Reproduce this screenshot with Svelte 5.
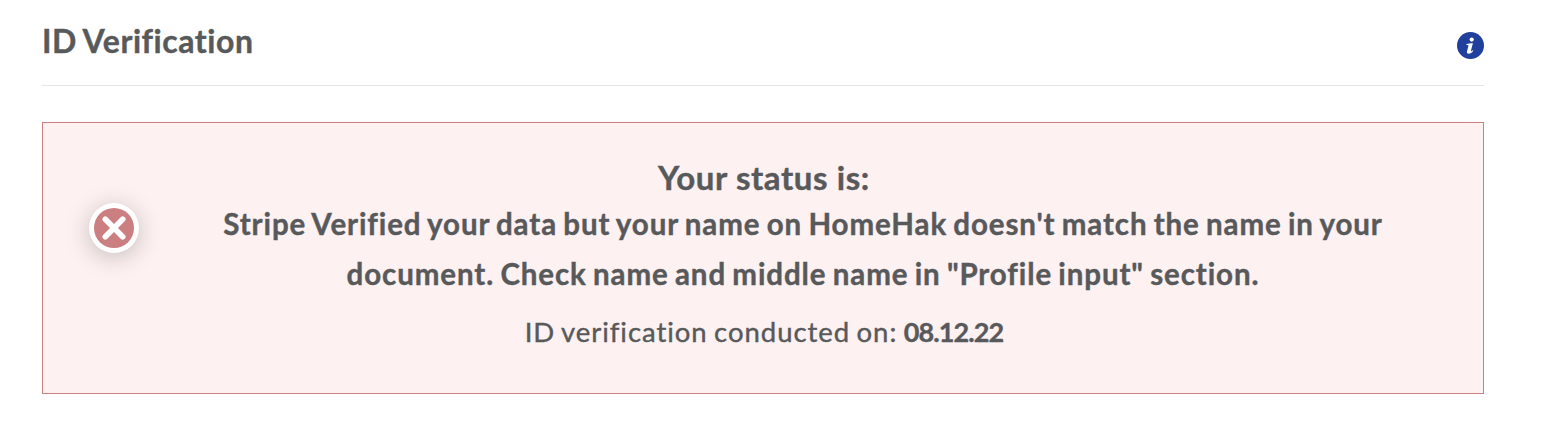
<script lang="ts">
    let title = "ID Verification";
    let verifiedOn = "08.12.22";
    let messageLines = [
        "Stripe Verified your data but your name on HomeHak doesn't match the name in your",
        'document. Check name and middle name in "Profile input" section.'
    ];
</script>

<section class="verification">
    <header class="header">
        <h2>{title}</h2>
        <svg class="info" viewBox="0 0 27 27" aria-label="Info">
            <circle cx="13.5" cy="13.5" r="13.5" fill="#213f9c" />
            <circle cx="14.7" cy="7.6" r="2.1" fill="#fff" />
            <path d="M9.5 12C11.5 11.5 13.2 11.3 15.9 11.2L14 18.4C13.7 19.7 14.4 19.5 15.8 18.2L16.4 18.8C14.9 20.9 13.3 21.7 11.8 21.7C10.2 21.7 9.6 20.7 10 19.2L11.4 14.1C11.7 13.1 11.3 12.9 9.4 12.9Z" fill="#fff" />
        </svg>
    </header>

    <div class="status">
        <h3>Your status is:</h3>
        <div class="status_row">
            <div class="badge">
                <svg viewBox="0 0 50 50">
                    <circle cx="25" cy="25" r="20" fill="#cb7f81" />
                    <path d="M16.3 16.3L33.7 33.7M33.7 16.3L16.3 33.7" stroke="#fff" stroke-width="5.6" stroke-linecap="round" />
                </svg>
            </div>
            <p class="message">
                {#each messageLines as line}
                    <span>{line}</span>
                {/each}
            </p>
        </div>
        <p class="date">ID verification conducted on: <b>{verifiedOn}</b></p>
    </div>
</section>

<style>
    :global(body) {
        background-color: #fff;
    }

    .verification {
        padding: 0 84px 0 42px;
        color: #58595b;
        font-family: Lato, "Liberation Sans", sans-serif;
        font-variant-ligatures: none;
        -webkit-text-stroke: 0.4px #58595b;
    }

    h2, h3, p {
        margin: 0;
        white-space: nowrap;
    }

    .header {
        box-sizing: border-box;
        height: 86px;
        display: flex;
        justify-content: space-between;
        align-items: flex-start;
        border-bottom: 1px solid #e4e4e4;
    }

    h2 {
        padding-top: 21px;
        font-size: 32px;
        line-height: 40px;
        letter-spacing: 0.55px;
        word-spacing: -1.5px;
    }

    .info {
        width: 27px;
        height: 27px;
        margin-top: 32px;
    }

    .status {
        box-sizing: border-box;
        height: 272px;
        margin-top: 36px;
        padding: 33px 44px 0 46px;
        border: 1px solid #cb7f81;
        background-color: #fdf1f1;
        text-align: center;
    }

    h3 {
        font-size: 33px;
        line-height: 42px;
        letter-spacing: 0.6px;
    }

    .status_row {
        display: flex;
        align-items: flex-start;
        gap: 28px;
        padding-top: 1px;
    }

    .badge {
        width: 50px;
        height: 50px;
        margin-top: 4px;
        border-radius: 50%;
        background-color: #fff;
        box-shadow: 0 4px 24px rgba(0, 0, 0, 0.22);
    }

    .badge svg {
        display: block;
    }

    .message {
        flex: 1;
        font-size: 29.5px;
        font-weight: 700;
        line-height: 50px;
        letter-spacing: 0.9px;
        word-spacing: -1.8px;
    }

    .message span {
        display: block;
    }

    .date {
        padding-top: 13px;
        font-size: 27.5px;
        line-height: 40px;
        letter-spacing: 0.95px;
        word-spacing: -1.5px;
    }

    .date b {
        font-size: 27px;
        letter-spacing: -0.9px;
    }
</style>
